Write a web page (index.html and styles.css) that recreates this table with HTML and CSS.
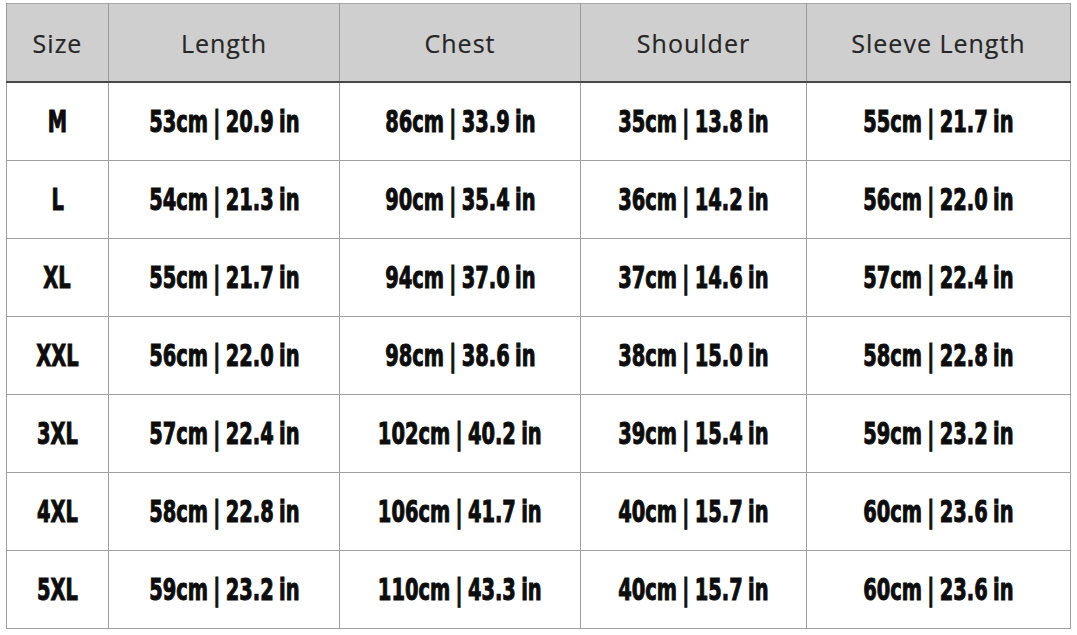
FILE: index.html
```html
<!DOCTYPE html>
<html>
<head>
<meta charset="utf-8">
<link rel="stylesheet" href="styles.css">
</head>
<body>
<table class="chart">
  <colgroup>
    <col class="c1"><col class="c2"><col class="c3"><col class="c4"><col class="c5">
  </colgroup>
  <thead>
    <tr><th>Size</th><th>Length</th><th>Chest</th><th>Shoulder</th><th>Sleeve Length</th></tr>
  </thead>
  <tbody>
    <tr><td><span class="v">M</span></td><td><span class="v">53cm | 20.9 in</span></td><td><span class="v">86cm | 33.9 in</span></td><td><span class="v">35cm | 13.8 in</span></td><td><span class="v">55cm | 21.7 in</span></td></tr>
    <tr><td><span class="v">L</span></td><td><span class="v">54cm | 21.3 in</span></td><td><span class="v">90cm | 35.4 in</span></td><td><span class="v">36cm | 14.2 in</span></td><td><span class="v">56cm | 22.0 in</span></td></tr>
    <tr><td><span class="v">XL</span></td><td><span class="v">55cm | 21.7 in</span></td><td><span class="v">94cm | 37.0 in</span></td><td><span class="v">37cm | 14.6 in</span></td><td><span class="v">57cm | 22.4 in</span></td></tr>
    <tr><td><span class="v">XXL</span></td><td><span class="v">56cm | 22.0 in</span></td><td><span class="v">98cm | 38.6 in</span></td><td><span class="v">38cm | 15.0 in</span></td><td><span class="v">58cm | 22.8 in</span></td></tr>
    <tr><td><span class="v">3XL</span></td><td><span class="v">57cm | 22.4 in</span></td><td><span class="v">102cm | 40.2 in</span></td><td><span class="v">39cm | 15.4 in</span></td><td><span class="v">59cm | 23.2 in</span></td></tr>
    <tr><td><span class="v">4XL</span></td><td><span class="v">58cm | 22.8 in</span></td><td><span class="v">106cm | 41.7 in</span></td><td><span class="v">40cm | 15.7 in</span></td><td><span class="v">60cm | 23.6 in</span></td></tr>
    <tr><td><span class="v">5XL</span></td><td><span class="v">59cm | 23.2 in</span></td><td><span class="v">110cm | 43.3 in</span></td><td><span class="v">40cm | 15.7 in</span></td><td><span class="v">60cm | 23.6 in</span></td></tr>
  </tbody>
</table>
</body>
</html>
```
FILE: styles.css
```css
html, body {
  margin: 0;
  padding: 0;
  background: #ffffff;
}
body {
  padding: 3px 0 0 6px;
}
.chart {
  border-collapse: collapse;
  table-layout: fixed;
  width: 1064px;
  border: 1px solid #a8a8a8;
}
.c1 { width: 102px; }
.c2 { width: 231px; }
.c3 { width: 241px; }
.c4 { width: 226px; }
.c5 { width: 264px; }

.chart th {
  height: 77px;
  padding: 0;
  background: #cfcfcf;
  color: #262626;
  font-family: "Open Sans", "DejaVu Sans", sans-serif;
  font-weight: 400;
  font-size: 25px;
  letter-spacing: 1px;
  text-align: center;
  vertical-align: middle;
  border-left: 1px solid #9a9a9a;
  border-right: 1px solid #9a9a9a;
  border-bottom: 2px solid #474747;
  -webkit-text-stroke: 0.2px #262626;
}
.chart td {
  height: 77px;
  padding: 0;
  text-align: center;
  vertical-align: middle;
  border: 1px solid #a0a0a0;
  color: #0d0d0d;
  font-family: "DejaVu Sans Condensed", "DejaVu Sans", sans-serif;
  font-weight: 700;
  font-size: 30px;
  word-spacing: -2px;
}
.v {
  display: inline-block;
  transform: scaleX(0.72);
  white-space: nowrap;
  -webkit-text-stroke: 1px #0d0d0d;
}
```
